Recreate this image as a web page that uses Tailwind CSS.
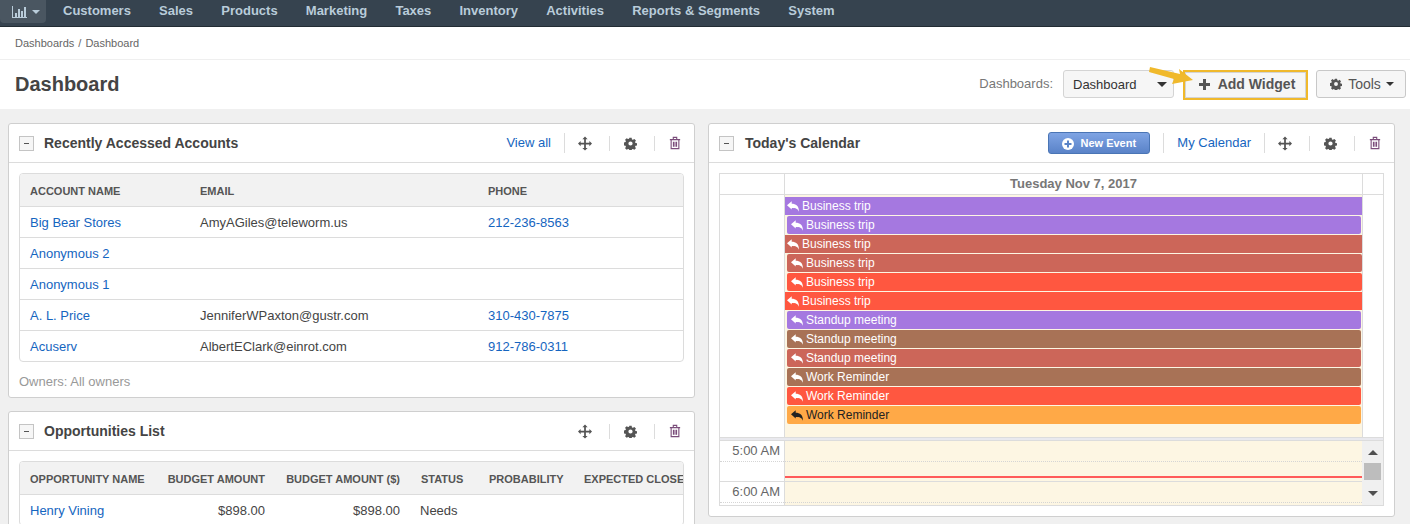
<!DOCTYPE html>
<html lang="en">
<head>
    <meta charset="UTF-8">
    <title>Dashboard</title>
    <script src="https://cdn.jsdelivr.net/npm/@tailwindcss/browser@4"></script>
</head>
<body class="h-[524px] overflow-hidden bg-[#f0f0f0] font-['Liberation_Sans',Arial,sans-serif] text-[13px] text-[#444]">
    <svg class="hidden">
        <symbol id="gear" viewBox="0 0 16 16"><path fill-rule="evenodd" d="M6.600 1h2.800l.4 2 1.200.5 1.700-1.100 2 2-1.100 1.700.5 1.200 2 .4v2.800l-2 .4-.5 1.200 1.100 1.700-2 2-1.700-1.100-1.200.5-.4 2H6.600l-.4-2-1.200-.5-1.700 1.100-2-2 1.100-1.700-.5-1.200-2-.4V6.700l2-.4.5-1.200-1.100-1.700 2-2L5 2.500l1.200-.5zM8 5.400a2.600 2.600 0 1 0 0 5.200 2.600 2.600 0 0 0 0-5.200z"/></symbol>
        <symbol id="move" viewBox="0 0 16 16"><path d="M8 0l3 3H9v4h4V5l3 3-3 3V9H9v4h2l-3 3-3-3h2V9H3v2L0 8l3-3v2h4V3H5z"/></symbol>
        <symbol id="trash" viewBox="0 0 14 16"><path fill="none" stroke="currentColor" stroke-width="1.300" d="M1 4h12M2.500 4v10.500h9V4M5 4V1.500h4V4M5.200 6.500v6M7 6.500v6M8.800 6.500v6"/></symbol>
        <symbol id="reply" viewBox="0 0 14 12"><path d="M0 4.500L5.500 0v2.700c4.800 0 8.500 2.300 8.500 9.300-1.500-3.600-3.800-4.300-8.500-4.300V9.500z"/></symbol>
    </svg>

    <!-- top nav -->
    <nav class="relative flex h-[27px] items-center border-b border-[#222c33] bg-[#36434f] pl-[63px] text-[13px] font-bold text-[#b9ccda]">
        <div class="absolute left-0 top-0 flex h-[23px] w-[46px] items-center gap-[5px] rounded-b bg-[#4a5661] pl-[12px]">
            <svg class="h-[12px] w-[15px] text-[#b9ccda]" viewBox="0 0 15 12" fill="currentColor"><path d="M0 0h1v11h14v1H0zM3 7h2v4H3zM6 3h2v8H6zM9 5h2v6H9zM12 1h2v10h-2z"/></svg>
            <span class="h-0 w-0 border-x-[4px] border-t-[4px] border-x-transparent border-t-[#b9ccda]"></span>
        </div>
        <div class="flex gap-[28.2px] pb-[4px]">
            <a>Customers</a><a>Sales</a><a>Products</a><a>Marketing</a><a>Taxes</a><a>Inventory</a><a>Activities</a><a>Reports &amp; Segments</a><a>System</a>
        </div>
    </nav>

    <!-- breadcrumb -->
    <div class="flex h-[33px] items-center border-b border-[#efefef] bg-white pl-[15px] pt-px text-[11px] text-[#666]">Dashboards<span class="mx-[4px]">/</span>Dashboard</div>

    <!-- page header -->
    <div class="flex h-[49px] items-start justify-between bg-white pl-[15px] pr-[4px] pt-[10px]">
        <h1 class="text-xl leading-[28px] font-bold text-[#444]">Dashboard</h1>
        <div class="relative flex items-start">
            <span class="mr-[10px] leading-[28px] text-[#777]">Dashboards:</span>
            <div class="mr-[9px] flex h-[28px] w-[111px] items-center justify-between rounded-[3px] border border-[#d4d4d4] bg-[#f6f6f6] pl-[9px] pr-[6px] text-[#333]">
                <span class="pt-px">Dashboard</span>
                <span class="h-0 w-0 border-x-[5px] border-t-[5px] border-x-transparent border-t-[#333]"></span>
            </div>
            <div class="mr-[8px] flex h-[30px] w-[125px] items-center justify-center gap-[8px] border-2 border-[#f0b92c] bg-[#f6f6f6] pb-[2px] pl-[3px] text-sm font-bold text-[#555] shadow-[inset_0_0_0_1px_#d4d4d4]">
                <svg class="h-[11px] w-[11px]" viewBox="0 0 11 11" fill="#555"><path d="M4 0h3v4h4v3H7v4H4V7H0V4h4z"/></svg>
                <span>Add Widget</span>
            </div>
            <div class="flex h-[28px] w-[90px] items-center justify-center gap-[6px] rounded-[3px] border border-[#c8c8c8] bg-[#f6f6f6] pl-[2px] text-sm text-[#555]">
                <svg class="h-[12px] w-[12px] fill-[#555]"><use href="#gear"/></svg>
                <span>Tools</span>
                <span class="-ml-px h-0 w-0 border-x-[4px] border-t-[4px] border-x-transparent border-t-[#333]"></span>
            </div>
            <!-- arrow callout -->
            <svg class="absolute left-[170px] top-[-4px] h-[20px] w-[46px]" viewBox="0 0 46 20" fill="#f0b92c"><path d="M1 1l30 7-1-5 14 11-21 4 2-5L0 6z"/></svg>
        </div>
    </div>

    <div class="mt-[14px] grid grid-cols-[687px_687px] gap-[13px] pl-[8px]">
        <!-- left column -->
        <div class="flex flex-col gap-[13px]">
            <section class="h-[275px] rounded-[3px] border border-[#cfcfcf] bg-white">
                <header class="flex h-[39px] items-center border-b border-[#dcdcdc] pl-[10px] pr-[13px]">
                    <span class="flex h-[15px] w-[15px] items-center justify-center border border-[#c4c4c4] bg-[#f6f6f6]"><span class="h-px w-[5px] bg-[#555]"></span></span>
                    <h2 class="ml-[10px] flex-1 text-sm font-bold text-[#444]">Recently Accessed Accounts</h2>
                    <a class="text-[#1565c0]">View all</a>
                    <span class="ml-[13px] h-[20px] w-px bg-[#dcdcdc]"></span>
                    <svg class="ml-[13px] mr-[17px] h-[15px] w-[14px] fill-[#555]"><use href="#move"/></svg>
                    <span class="h-[15px] w-px bg-[#dcdcdc]"></span>
                    <svg class="ml-[14px] mr-[17px] h-[13px] w-[13px] fill-[#555]"><use href="#gear"/></svg>
                    <span class="h-[15px] w-px bg-[#dcdcdc]"></span>
                    <svg class="ml-[14px] h-[14px] w-[12px] text-[#7a4d7a]"><use href="#trash"/></svg>
                </header>
                <div class="mx-[10px] mt-[10px] overflow-hidden rounded-[4px] border border-[#dcdcdc]">
                    <table class="w-full table-fixed text-left">
                        <colgroup><col class="w-[170px]"><col class="w-[288px]"><col></colgroup>
                        <thead class="bg-[#f2f2f2] text-[11px] font-bold text-[#555]">
                            <tr class="h-[32px]"><th class="pl-[10px] pt-[2px]">ACCOUNT NAME</th><th class="pl-[10px] pt-[2px]">EMAIL</th><th class="pl-[10px] pt-[2px]">PHONE</th></tr>
                        </thead>
                        <tbody class="[&_td]:pt-[2px]">
                            <tr class="h-[31px] border-t border-[#dcdcdc]"><td class="pl-[10px] text-[#1565c0]">Big Bear Stores</td><td class="pl-[10px]">AmyAGiles@teleworm.us</td><td class="pl-[10px] text-[#1565c0]">212-236-8563</td></tr>
                            <tr class="h-[31px] border-t border-[#dcdcdc]"><td class="pl-[10px] text-[#1565c0]">Anonymous 2</td><td></td><td></td></tr>
                            <tr class="h-[31px] border-t border-[#dcdcdc]"><td class="pl-[10px] text-[#1565c0]">Anonymous 1</td><td></td><td></td></tr>
                            <tr class="h-[31px] border-t border-[#dcdcdc]"><td class="pl-[10px] text-[#1565c0]">A. L. Price</td><td class="pl-[10px]">JenniferWPaxton@gustr.com</td><td class="pl-[10px] text-[#1565c0]">310-430-7875</td></tr>
                            <tr class="h-[31px] border-t border-[#dcdcdc]"><td class="pl-[10px] text-[#1565c0]">Acuserv</td><td class="pl-[10px]">AlbertEClark@einrot.com</td><td class="pl-[10px] text-[#1565c0]">912-786-0311</td></tr>
                        </tbody>
                    </table>
                </div>
                <p class="ml-[10px] mt-[10px] text-[#999]">Owners: All owners</p>
            </section>

            <section class="h-[200px] rounded-[3px] border border-[#cfcfcf] bg-white">
                <header class="flex h-[39px] items-center border-b border-[#dcdcdc] pl-[10px] pr-[13px]">
                    <span class="flex h-[15px] w-[15px] items-center justify-center border border-[#c4c4c4] bg-[#f6f6f6]"><span class="h-px w-[5px] bg-[#555]"></span></span>
                    <h2 class="ml-[10px] flex-1 text-sm font-bold text-[#444]">Opportunities List</h2>
                    <svg class="ml-[13px] mr-[17px] h-[15px] w-[14px] fill-[#555]"><use href="#move"/></svg>
                    <span class="h-[15px] w-px bg-[#dcdcdc]"></span>
                    <svg class="ml-[14px] mr-[17px] h-[13px] w-[13px] fill-[#555]"><use href="#gear"/></svg>
                    <span class="h-[15px] w-px bg-[#dcdcdc]"></span>
                    <svg class="ml-[14px] h-[14px] w-[12px] text-[#7a4d7a]"><use href="#trash"/></svg>
                </header>
                <div class="mx-[10px] mt-[10px] overflow-hidden rounded-[4px] border border-[#dcdcdc]">
                    <div class="flex h-[32px] items-center whitespace-nowrap bg-[#f2f2f2] pt-[2px] text-[11px] font-bold text-[#555]">
                        <span class="ml-[10px] w-[137px] shrink-0">OPPORTUNITY NAME</span>
                        <span class="w-[98px] shrink-0 text-right">BUDGET AMOUNT</span>
                        <span class="w-[135px] shrink-0 text-right">BUDGET AMOUNT ($)</span>
                        <span class="ml-[21px] w-[68px] shrink-0">STATUS</span>
                        <span class="w-[95px] shrink-0">PROBABILITY</span>
                        <span class="shrink-0">EXPECTED CLOSE DATE</span>
                    </div>
                    <div class="flex h-[31px] items-center border-t border-[#dcdcdc] pt-[2px]">
                        <span class="ml-[10px] w-[137px] shrink-0 text-[#1565c0]">Henry Vining</span>
                        <span class="w-[98px] shrink-0 text-right">$898.00</span>
                        <span class="w-[135px] shrink-0 text-right">$898.00</span>
                        <span class="ml-[20px]">Needs</span>
                    </div>
                </div>
            </section>
        </div>

        <!-- right column -->
        <section class="h-[394px] rounded-[3px] border border-[#cfcfcf] bg-white">
            <header class="flex h-[39px] items-center border-b border-[#dcdcdc] pl-[10px] pr-[13px]">
                <span class="flex h-[15px] w-[15px] items-center justify-center border border-[#c4c4c4] bg-[#f6f6f6]"><span class="h-px w-[5px] bg-[#555]"></span></span>
                <h2 class="ml-[11px] flex-1 text-sm font-bold text-[#444]">Today's Calendar</h2>
                <a class="flex h-[22px] w-[102px] items-center justify-center gap-[6px] rounded-[3px] border border-[#4a75b5] bg-linear-to-b from-[#7fa4e4] to-[#5a83c8] pt-px text-[11px] font-bold text-white">
                    <svg class="h-[12px] w-[12px]" viewBox="0 0 12 12"><circle cx="6" cy="6" r="6" fill="#fff"/><path d="M5 2.500h2V5h2.500v2H7v2.500H5V7H2.500V5H5z" fill="#5a84c8"/></svg>
                    New Event
                </a>
                <span class="ml-[13px] h-[20px] w-px bg-[#dcdcdc]"></span>
                <a class="ml-[13px] text-[#1565c0]">My Calendar</a>
                <span class="ml-[13px] h-[20px] w-px bg-[#dcdcdc]"></span>
                <svg class="ml-[13px] mr-[17px] h-[15px] w-[14px] fill-[#555]"><use href="#move"/></svg>
                <span class="h-[15px] w-px bg-[#dcdcdc]"></span>
                <svg class="ml-[14px] mr-[17px] h-[13px] w-[13px] fill-[#555]"><use href="#gear"/></svg>
                <span class="h-[15px] w-px bg-[#dcdcdc]"></span>
                <svg class="ml-[14px] h-[14px] w-[12px] text-[#7a4d7a]"><use href="#trash"/></svg>
            </header>
            <div class="mx-[10px] mt-[10px] border border-[#dcdcdc]">
                <div class="grid h-[21px] grid-cols-[65px_1fr_21px] border-b border-[#dcdcdc] text-[13px] font-bold text-[#777]">
                    <span class="border-r border-[#dcdcdc]"></span>
                    <span class="text-center leading-[20px]">Tuesday Nov 7, 2017</span>
                    <span class="border-l border-[#dcdcdc]"></span>
                </div>
                <div class="grid h-[243px] grid-cols-[65px_1fr_21px] border-b border-[#dcdcdc]">
                    <span class="border-r border-[#dcdcdc]"></span>
                    <div class="flex flex-col gap-px bg-[#fdf6e3] pt-[2px] text-xs text-white">
                        <div class="flex h-[18px] items-center gap-[3px] bg-[#a578e0] pl-[2px]"><svg class="h-[11px] w-[12px] fill-white"><use href="#reply"/></svg>Business trip</div>
                        <div class="ml-[2px] mr-[1px] flex h-[18px] items-center gap-[3px] rounded-[2px] bg-[#a578e0] pl-[4px]"><svg class="h-[11px] w-[12px] fill-white"><use href="#reply"/></svg>Business trip</div>
                        <div class="flex h-[18px] items-center gap-[3px] bg-[#cc6659] pl-[2px]"><svg class="h-[11px] w-[12px] fill-white"><use href="#reply"/></svg>Business trip</div>
                        <div class="ml-[2px] flex h-[18px] items-center gap-[3px] rounded-[2px] bg-[#cc6659] pl-[4px]"><svg class="h-[11px] w-[12px] fill-white"><use href="#reply"/></svg>Business trip</div>
                        <div class="ml-[2px] flex h-[18px] items-center gap-[3px] rounded-[2px] bg-[#ff5740] pl-[4px]"><svg class="h-[11px] w-[12px] fill-white"><use href="#reply"/></svg>Business trip</div>
                        <div class="flex h-[18px] items-center gap-[3px] bg-[#ff5740] pl-[2px]"><svg class="h-[11px] w-[12px] fill-white"><use href="#reply"/></svg>Business trip</div>
                        <div class="ml-[2px] mr-[1px] flex h-[18px] items-center gap-[3px] rounded-[2px] bg-[#a578e0] pl-[4px]"><svg class="h-[11px] w-[12px] fill-white"><use href="#reply"/></svg>Standup meeting</div>
                        <div class="ml-[2px] mr-[1px] flex h-[18px] items-center gap-[3px] rounded-[2px] bg-[#a87256] pl-[4px]"><svg class="h-[11px] w-[12px] fill-white"><use href="#reply"/></svg>Standup meeting</div>
                        <div class="ml-[2px] mr-[1px] flex h-[18px] items-center gap-[3px] rounded-[2px] bg-[#cc6659] pl-[4px]"><svg class="h-[11px] w-[12px] fill-white"><use href="#reply"/></svg>Standup meeting</div>
                        <div class="ml-[2px] mr-[1px] flex h-[18px] items-center gap-[3px] rounded-[2px] bg-[#a87256] pl-[4px]"><svg class="h-[11px] w-[12px] fill-white"><use href="#reply"/></svg>Work Reminder</div>
                        <div class="ml-[2px] mr-[1px] flex h-[18px] items-center gap-[3px] rounded-[2px] bg-[#ff5740] pl-[4px]"><svg class="h-[11px] w-[12px] fill-white"><use href="#reply"/></svg>Work Reminder</div>
                        <div class="ml-[2px] mr-[1px] flex h-[18px] items-center gap-[3px] rounded-[2px] bg-[#ffa947] pl-[4px] text-[#222]"><svg class="h-[11px] w-[12px] fill-[#222]"><use href="#reply"/></svg>Work Reminder</div>
                    </div>
                    <span class="border-l border-[#dcdcdc]"></span>
                </div>
                <div class="h-[3px] border-b border-[#dcdcdc] bg-[#e9e9ee]"></div>
                <div class="grid h-[64px] grid-cols-[65px_1fr_21px] overflow-hidden">
                    <div class="border-r border-[#dcdcdc] text-right text-[#666]">
                        <div class="h-[21px] border-b border-dotted border-[#d5d5d5] pr-[4px] leading-[20px]">5:00 AM</div>
                        <div class="h-[20px] border-b border-[#dcdcdc]"></div>
                        <div class="h-[21px] border-b border-dotted border-[#d5d5d5] pr-[4px] leading-[20px]">6:00 AM</div>
                    </div>
                    <div class="relative bg-[#fdf6e3]">
                        <div class="h-[21px] border-b border-dotted border-[#d5d5d5]"></div>
                        <div class="h-[20px] border-b border-[#dcdcdc]"></div>
                        <div class="h-[21px] border-b border-dotted border-[#d5d5d5]"></div>
                        <div class="absolute inset-x-0 top-[35px] h-[2px] bg-[#ff5a5a]"></div>
                    </div>
                    <div class="flex flex-col items-center bg-[#f0f0f0] pt-[9px]">
                        <span class="h-0 w-0 border-x-[5px] border-b-[5px] border-x-transparent border-b-[#505050]"></span>
                        <span class="mt-[8px] h-[17px] w-[17px] bg-[#bdbdbd]"></span>
                        <span class="mt-[11px] h-0 w-0 border-x-[5px] border-t-[5px] border-x-transparent border-t-[#505050]"></span>
                    </div>
                </div>
            </div>
        </section>
    </div>
</body>
</html>
